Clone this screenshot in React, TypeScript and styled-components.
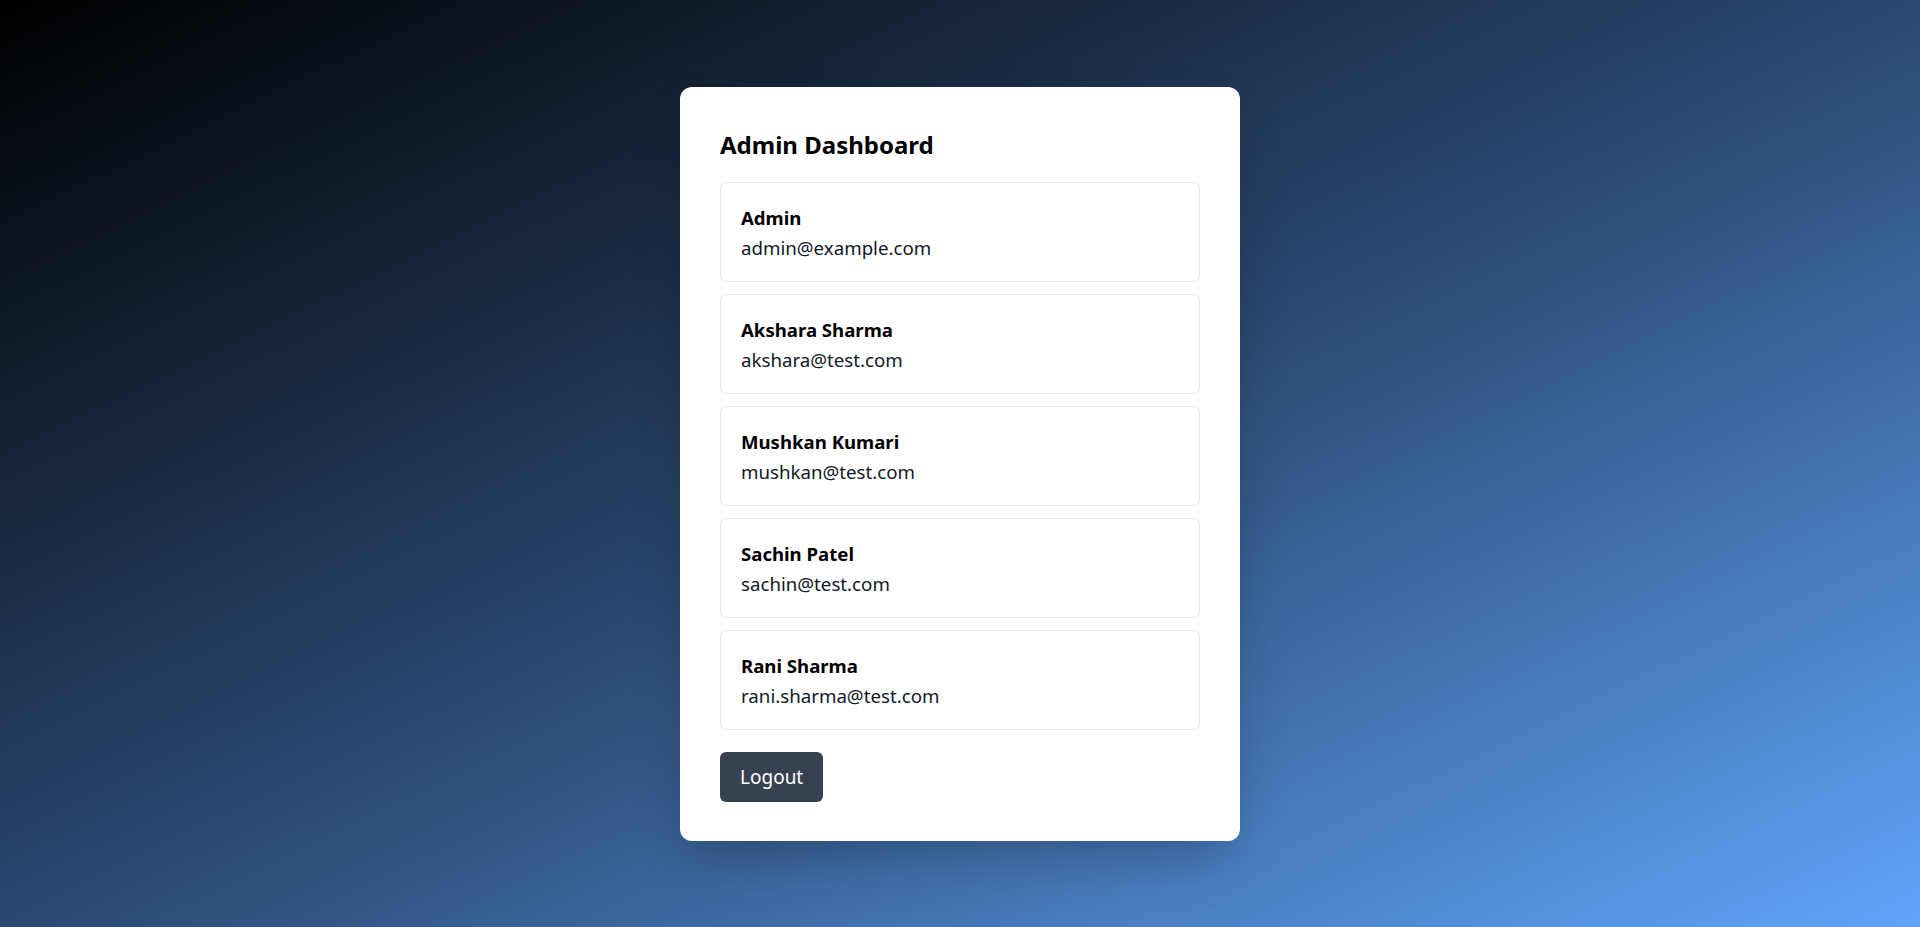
import React from "react";
import styled, { createGlobalStyle } from "styled-components";

const GlobalStyle = createGlobalStyle`
  * {
    box-sizing: border-box;
  }
  html, body {
    margin: 0;
    padding: 0;
  }
  body {
    font-family: "Segoe UI", "Noto Sans", "Open Sans", sans-serif;
    color: #000;
  }
`;

const Page = styled.main`
  min-height: 100vh;
  display: flex;
  align-items: center;
  justify-content: center;
  background: linear-gradient(to bottom right, #000000 0%, #2a4870 50%, #60a5fa 100%);
`;

const Card = styled.section`
  width: 560px;
  padding: 40px 40px 39px;
  background: #ffffff;
  border-radius: 12px;
  box-shadow: 0 25px 50px -12px rgba(0, 0, 0, 0.25);
`;

const Title = styled.h2`
  margin: 0 0 22px;
  padding-top: 3px;
  font-size: 24px;
  line-height: 30px;
  font-weight: 700;
`;

const UserList = styled.ul`
  list-style: none;
  margin: 0 0 22px;
  padding: 0;
  display: flex;
  flex-direction: column;
  gap: 12px;
`;

const UserRow = styled.li`
  padding: 21px 20px 19px;
  border: 1px solid #e5e7eb;
  border-radius: 6px;
  background: #fff;
`;

const UserName = styled.div`
  font-size: 18.6px;
  line-height: 28px;
  font-weight: 700;
`;

const UserEmail = styled.div`
  margin-top: 2px;
  font-size: 18.7px;
  line-height: 28px;
  color: #111827;
`;

const LogoutButton = styled.button`
  display: inline-block;
  height: 50px;
  padding: 0 20px;
  border: none;
  border-radius: 6px;
  background: #374151;
  color: #fff;
  font-family: inherit;
  font-size: 19px;
  cursor: pointer;
  &:hover {
    background: #1f2937;
  }
`;

const users = [
  { name: "Admin", email: "admin@example.com" },
  { name: "Akshara Sharma", email: "akshara@test.com" },
  { name: "Mushkan Kumari", email: "mushkan@test.com" },
  { name: "Sachin Patel", email: "sachin@test.com" },
  { name: "Rani Sharma", email: "rani.sharma@test.com" },
];

const App = () => {
  return (
    <>
      <GlobalStyle />
      <Page>
        <Card>
          <Title>Admin Dashboard</Title>
          <UserList>
            {users.map((u) => (
              <UserRow key={u.email}>
                <UserName>{u.name}</UserName>
                <UserEmail>{u.email}</UserEmail>
              </UserRow>
            ))}
          </UserList>
          <LogoutButton type="button">Logout</LogoutButton>
        </Card>
      </Page>
    </>
  );
};

export default App;
